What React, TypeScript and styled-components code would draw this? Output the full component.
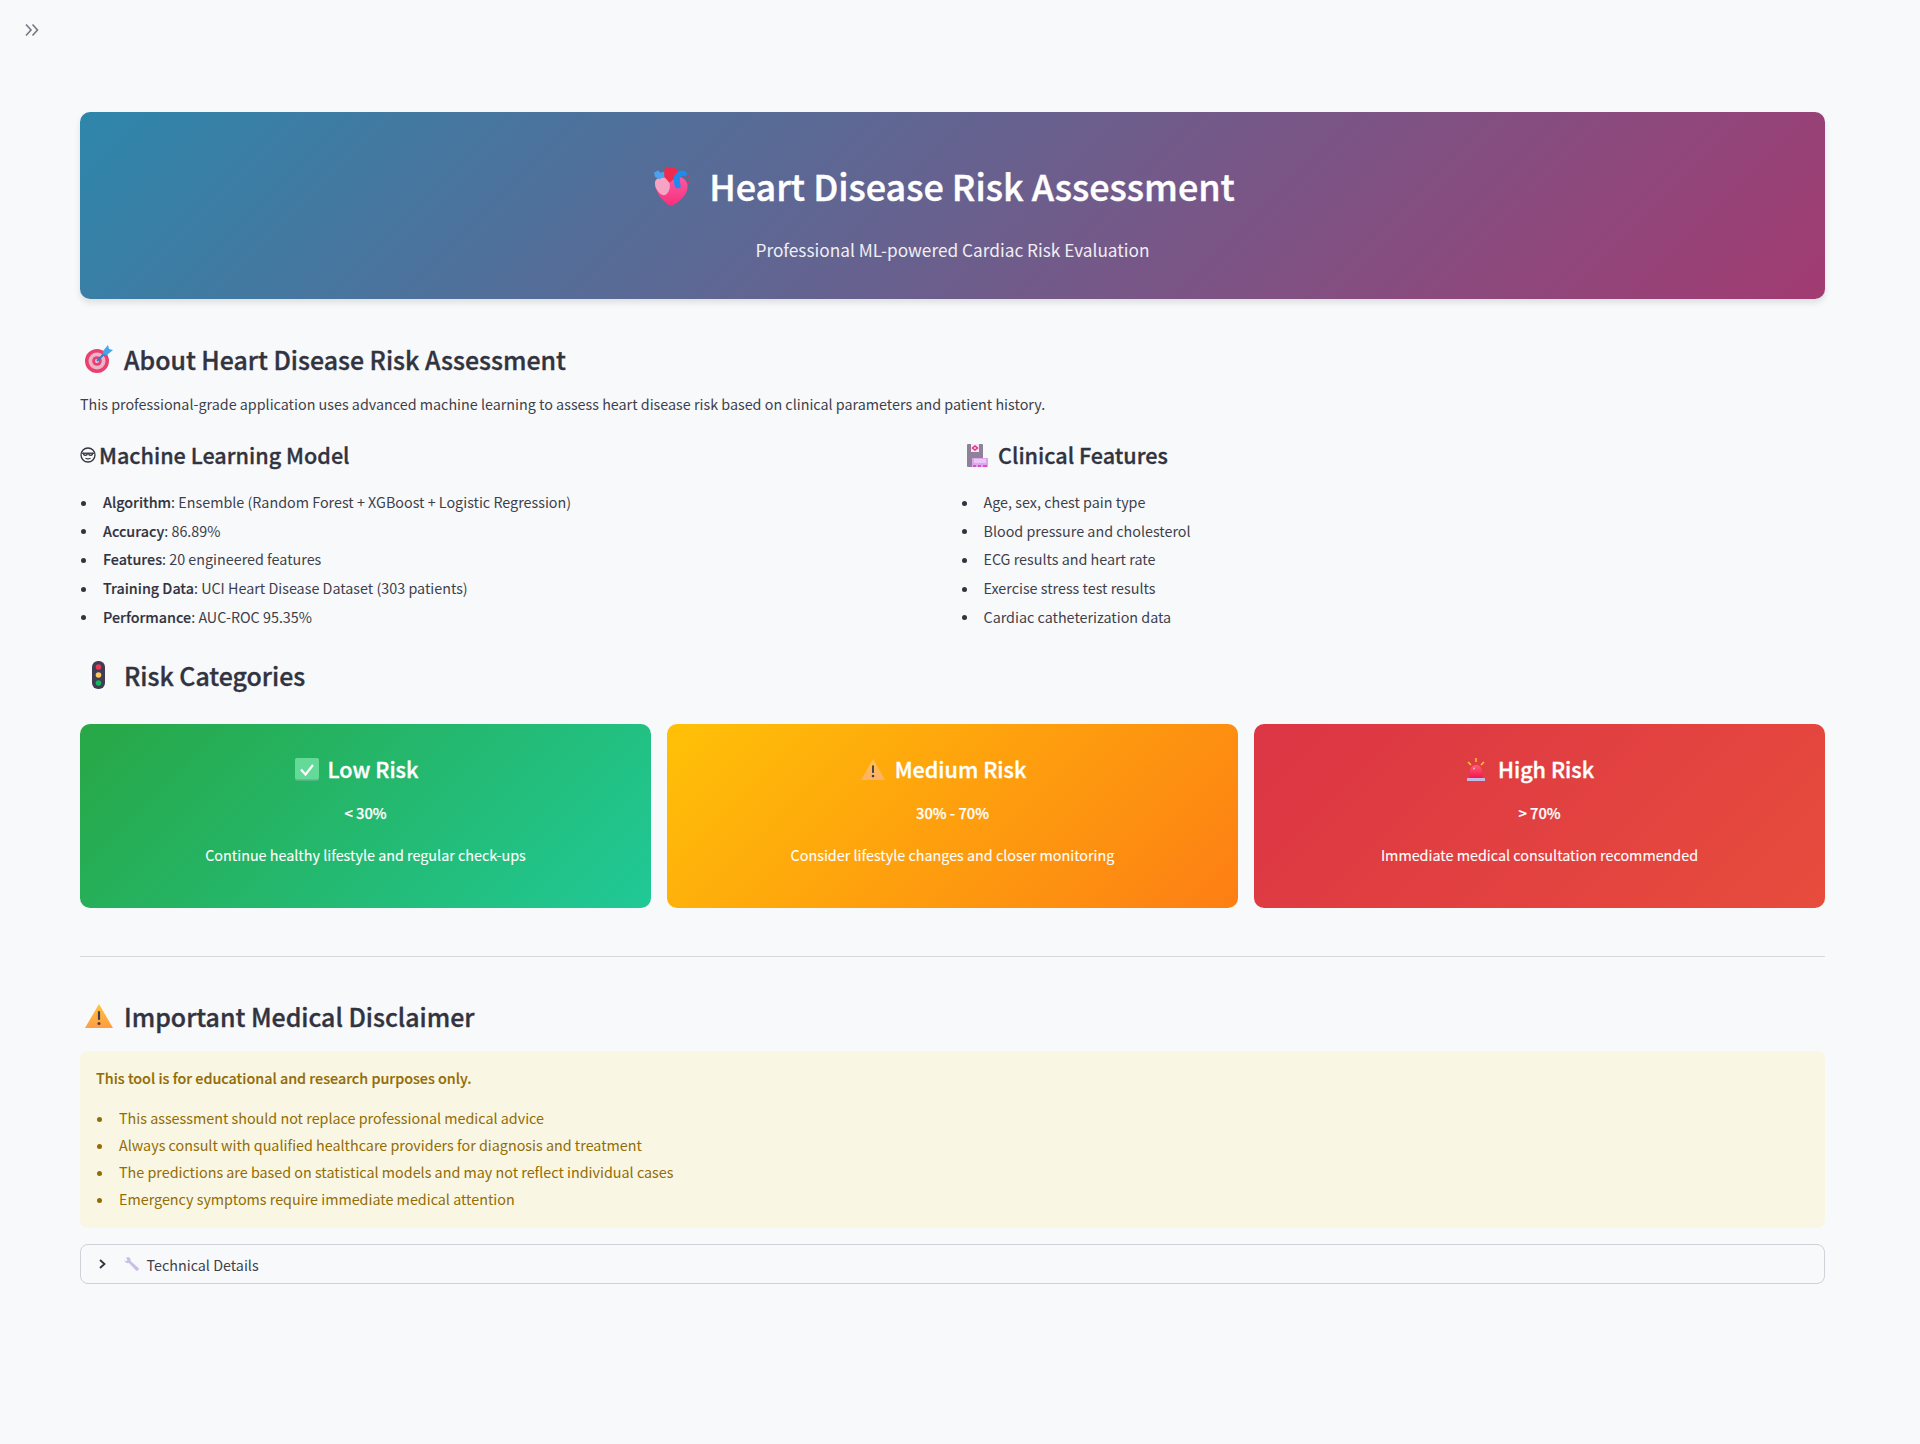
import React from "react";
import styled, { createGlobalStyle } from "styled-components";

const Global = createGlobalStyle`
  html, body { margin: 0; padding: 0; background: #f8f9fb; }
  body { font-family: "Noto Sans CJK SC", "Noto Sans", sans-serif; color: #31333f; font-size: 14.33px; }
  * { box-sizing: border-box; }
`;

const Page = styled.div`
  min-height: 1444px;
  background: #f8f9fb;
  position: relative;
  padding: 112px 95px 0 80px;
`;
const Toggle = styled.div`
  position: absolute; left: 24px; top: 22px; width: 16px; height: 16px; color: #737683;
  svg { display: block; }
`;
const Hero = styled.header`
  height: 187px;
  border-radius: 10px;
  background: linear-gradient(135deg, #2e86ab 0%, #a23b72 100%);
  box-shadow: 0 4px 6px rgba(0,0,0,0.1);
  color: #fff;
  text-align: center;
  padding-top: 47px;
`;
const HeroTitle = styled.h1`
  margin: 0; height: 52px; padding-right: 17px; font-size: 35.9px; line-height: 52px; font-weight: 500; -webkit-text-stroke: 0.45px currentColor;
  display: flex; justify-content: center; align-items: center; gap: 20px;
  svg { margin-top: 2px; }
`;
const HeroSub = styled.p`
  margin: 25.5px 0 0; font-size: 17.25px; line-height: 26px; opacity: .9;
`;
const H2 = styled.h2`
  margin: ${p => p.$mt}px 0 0; font-size: 24.9px; line-height: 36px; font-weight: 500; -webkit-text-stroke: 0.35px currentColor;
  display: flex; align-items: center; gap: ${p => p.$gap}px; color: #31333f;
  svg { margin-left: ${p => p.$inset}px; }
`;
const Para = styled.p`
  margin: 16px 0 0; line-height: 22px; color: #3d3f4b;
`;
const Columns = styled.div`
  display: grid; grid-template-columns: 1fr 1fr; column-gap: 16px; margin-top: 23.4px;
`;
const H3 = styled.h3`
  margin: 0; font-size: 21.6px; line-height: 34px; font-weight: 500; -webkit-text-stroke: 0.3px currentColor;
  display: flex; align-items: center; gap: ${p => p.$gap}px;
  svg { margin-left: ${p => p.$inset}px; }
`;
const List = styled.ul`
  margin: 18.5px 0 0; padding: 0 0 0 23px; line-height: 22px; list-style: none; color: #3d3f4b;
  li { margin-bottom: 6.7px; }
  li::before { content: ""; display: inline-block; width: 5px; height: 5px; border-radius: 50%; background: #31333f; margin: 0 17px 2px -22px; vertical-align: middle; }
  b { font-weight: 500; color: #31333f; -webkit-text-stroke: 0.15px currentColor; }
`;
const Cards = styled.div`
  display: grid; grid-template-columns: repeat(3, 1fr); gap: 16px; margin-top: 31px;
`;
const Card = styled.div`
  height: 184px; border-radius: 10px; color: #fff; text-align: center; padding-top: 29px;
  background: ${p => p.$bg};
`;
const CardTitle = styled.h3`
  margin: 0; padding-right: 18px; font-size: 21.6px; line-height: 32px; font-weight: 500; -webkit-text-stroke: 0.35px currentColor;
  display: flex; justify-content: center; align-items: center; gap: ${p => p.$gap}px;
`;
const CardRange = styled.div`
  margin-top: 17px; font-size: 14.7px; line-height: 22px; font-weight: 500; -webkit-text-stroke: 0.25px currentColor;
`;
const CardText = styled.div`
  margin-top: 20px; font-size: 14.35px; line-height: 22px; -webkit-text-stroke: 0.1px currentColor;
`;
const Rule = styled.hr`
  margin: 48px 0 0; border: 0; border-top: 1px solid #d6d8dd;
`;
const Notice = styled.div`
  margin-top: 17.5px; background: #f9f6e3; border-radius: 8px; color: #926c05; padding: 16px;
  height: 177px;
`;
const NoticeLead = styled.p`
  margin: 0; line-height: 22px; font-weight: 500; -webkit-text-stroke: 0.15px currentColor;
`;
const NoticeList = styled.ul`
  margin: 18px 0 0; padding-left: 23px; line-height: 22px; list-style: none;
  li { margin-bottom: 5px; }
  li::before { content: ""; display: inline-block; width: 5px; height: 5px; border-radius: 50%; background: currentColor; margin: 0 17px 2px -22px; vertical-align: middle; }
`;
const Expander = styled.div`
  margin-top: 16px; height: 40px; border: 1px solid #d0d2d9; border-radius: 8px; display: flex; align-items: center; padding-left: 16px; gap: 15px; color: #3d3f4b;
`;
const ExpanderLabel = styled.span`
  display: flex; align-items: center; gap: 7.5px;
`;

const Heart = () => (
  <svg width="36" height="40" viewBox="0 0 35 48" preserveAspectRatio="none">
    <defs>
      <linearGradient id="hb" x1="0" y1="0" x2="0" y2="1">
        <stop offset="0" stopColor="#fb5aa5" />
        <stop offset="1" stopColor="#f8307a" />
      </linearGradient>
    </defs>
    <path d="M2 22C1 14 9 11 15 14c5-4 15-2 18 6 3 10-5 22-14 27-2 1-4 0-5-1C8 40 3 32 2 22z" fill="url(#hb)" />
    <path d="M2 22C1 15 8 12 13 15c5 4 4 15 0 19-2 2-5 1-7-2-3-4-4-7-4-10z" fill="#f6a3c4" />
    <path d="M1 8l4-3 2 3 4-1 1 6-6 3-4-3z" fill="#4ba3ef" />
    <path d="M11 4l3-4 2 3 4-2 4 4-2 9-6 6-5-7z" fill="#f0294e" />
    <path d="M20 15c1-7 6-10 10-9 3 1 4 4 2 6-4-1-6 1-6 5l1 8c-2 3-5 2-6-1z" fill="#1f8bed" />
    <path d="M32 14l3-1M33 19l2 1" stroke="#f0294e" strokeWidth="1.200" />
  </svg>
);
const Dart = () => (
  <svg width="28" height="28" viewBox="0 0 28 28">
    <circle cx="12" cy="16" r="12" fill="#e9406f" />
    <circle cx="12" cy="16" r="8.500" fill="#edb3c7" />
    <circle cx="12" cy="16" r="4.800" fill="#e9406f" />
    <circle cx="12" cy="16" r="2" fill="#f3c6d4" />
    <path d="M12 16l10-10" stroke="#2b7fd0" strokeWidth="2" />
    <path d="M18 6l5-6 1 4 4 1-6 5-4-1z" fill="#3fa7ee" />
  </svg>
);
const Face = () => (
  <svg width="16" height="16" viewBox="0 0 16 16" fill="none" stroke="#31333f" strokeWidth="1.300">
    <circle cx="8" cy="8" r="7" />
    <path d="M2 6.200h12" />
    <path d="M3.500 6.200c0 2.800 3.500 2.800 4 .3M12.500 6.200c0 2.800-3.500 2.800-4 .3M5.500 11.300c1.700.9 3.300.9 5 0" />
  </svg>
);
const Clipboard = () => (
  <svg width="21" height="23" viewBox="0 0 21 23">
    <rect x="0" y="0" width="16" height="23" rx="1" fill="#8f8199" />
    <rect x="4" y="0" width="8" height="8" fill="#f6e8f2" />
    <path d="M5.500 4l2.500-2 2.500 2L8 6z" fill="none" stroke="#ee2f84" strokeWidth="1.500" />
    <rect x="5" y="14" width="16" height="9" fill="#dca6ee" />
    <path d="M7 16h12M7 18h12" stroke="#fbe8fb" strokeWidth="1" />
    <path d="M6 22h3M11 22h3M16 22h4" stroke="#e52fb5" strokeWidth="1.500" />
  </svg>
);
const Traffic = () => (
  <svg width="13" height="28" viewBox="0 0 13 28">
    <rect x="0" y="0" width="13" height="28" rx="6" fill="#413c53" />
    <circle cx="6.500" cy="6" r="2.800" fill="#e83a58" />
    <circle cx="6.500" cy="14" r="2.800" fill="#fcc860" />
    <circle cx="6.500" cy="22" r="2.800" fill="#14b85a" />
  </svg>
);
const Check = () => (
  <svg width="24" height="23" viewBox="0 0 24 23">
    <rect x="0" y="0" width="24" height="23" rx="2" fill="#4fb583" />
    <rect x="0" y="0" width="24" height="21.500" rx="2" fill="#64da98" />
    <path d="M6 11.500l4.500 5L18 7" fill="none" stroke="#fff" strokeWidth="2.200" />
  </svg>
);
const Warn = ({ w, h, id, top, bottom }: { w: number; h: number; id: string; top: string; bottom: string }) => (
  <svg width={w} height={h} viewBox="0 0 28 24" preserveAspectRatio="none">
    <defs>
      <linearGradient id={id} x1="0" y1="0" x2="0" y2="1">
        <stop offset="0" stopColor={top} />
        <stop offset="1" stopColor={bottom} />
      </linearGradient>
    </defs>
    <path d="M14 0L28 24H0z" fill={`url(#${id})`} />
    <rect x="12.900" y="7" width="2.200" height="9" rx="1" fill="#413c53" />
    <circle cx="14" cy="19.500" r="1.500" fill="#413c53" />
  </svg>
);
const Siren = () => (
  <svg width="18" height="23" viewBox="0 0 18 23">
    <defs>
      <linearGradient id="sr" x1="0" y1="0" x2="0" y2="1">
        <stop offset="0" stopColor="#ff5f78" />
        <stop offset="1" stopColor="#f5154c" />
      </linearGradient>
    </defs>
    <path d="M2.500 20c0-8 1-13 6.500-13s6.500 5 6.500 13z" fill="url(#sr)" />
    <circle cx="7" cy="10.500" r="1" fill="#ffb3c0" />
    <rect x="0" y="20" width="18" height="3" fill="#c5b8e8" />
    <path d="M9 0v4M1 4l3 3M17 4l-3 3" stroke="#fcc43f" strokeWidth="1.500" />
  </svg>
);
const Wrench = () => (
  <svg width="15" height="14" viewBox="0 0 15 14">
    <path d="M0 3l2 1.500L3.500 3 2 1 4 0c2 .5 3 2 2.500 4l8 7c1 1.500-.5 3.500-2.500 2.500L5 6C3 6.500 .5 5.500 0 3z" fill="#c9bfe2" />
  </svg>
);

export default function App() {
  return (
    <Page>
      <Global />
      <Toggle>
        <svg width="16" height="16" viewBox="0 0 16 16" fill="none" stroke="currentColor" strokeWidth="1.600">
          <path d="M2 2.500L7 8l-5 5.500M8.500 2.500L13.500 8l-5 5.500" />
        </svg>
      </Toggle>
      <Hero>
        <HeroTitle><Heart />Heart Disease Risk Assessment</HeroTitle>
        <HeroSub>Professional ML-powered Cardiac Risk Evaluation</HeroSub>
      </Hero>
      <H2 $mt={42} $gap={11} $inset={5}><Dart />About Heart Disease Risk Assessment</H2>
      <Para>This professional-grade application uses advanced machine learning to assess heart disease risk based on clinical parameters and patient history.</Para>
      <Columns>
        <div>
          <H3 $gap={3} $inset={0}><Face />Machine Learning Model</H3>
          <List>
            <li><b>Algorithm</b>: Ensemble (Random Forest + XGBoost + Logistic Regression)</li>
            <li><b>Accuracy</b>: 86.89%</li>
            <li><b>Features</b>: 20 engineered features</li>
            <li><b>Training Data</b>: UCI Heart Disease Dataset (303 patients)</li>
            <li><b>Performance</b>: AUC-ROC 95.35%</li>
          </List>
        </div>
        <div>
          <H3 $gap={10} $inset={6.500}><Clipboard />Clinical Features</H3>
          <List>
            <li>Age, sex, chest pain type</li>
            <li>Blood pressure and cholesterol</li>
            <li>ECG results and heart rate</li>
            <li>Exercise stress test results</li>
            <li>Cardiac catheterization data</li>
          </List>
        </div>
      </Columns>
      <H2 $mt={23} $gap={19} $inset={12}><Traffic />Risk Categories</H2>
      <Cards>
        <Card $bg="linear-gradient(135deg, #28a745, #20c997)">
          <CardTitle $gap={9}><Check />Low Risk</CardTitle>
          <CardRange>&lt; 30%</CardRange>
          <CardText>Continue healthy lifestyle and regular check-ups</CardText>
        </Card>
        <Card $bg="linear-gradient(135deg, #ffc107, #fd7e14)">
          <CardTitle $gap={10}><Warn w={24} h={21} id="wm" top="#ffc247" bottom="#ffb168" />Medium Risk</CardTitle>
          <CardRange>30% - 70%</CardRange>
          <CardText>Consider lifestyle changes and closer monitoring</CardText>
        </Card>
        <Card $bg="linear-gradient(135deg, #dc3545, #e74c3c)">
          <CardTitle $gap={13}><Siren />High Risk</CardTitle>
          <CardRange>&gt; 70%</CardRange>
          <CardText>Immediate medical consultation recommended</CardText>
        </Card>
      </Cards>
      <Rule />
      <H2 $mt={40.5} $gap={11} $inset={5}><Warn w={28} h={24} id="wb" top="#ffc43d" bottom="#ff9d42" />Important Medical Disclaimer</H2>
      <Notice>
        <NoticeLead>This tool is for educational and research purposes only.</NoticeLead>
        <NoticeList>
          <li>This assessment should not replace professional medical advice</li>
          <li>Always consult with qualified healthcare providers for diagnosis and treatment</li>
          <li>The predictions are based on statistical models and may not reflect individual cases</li>
          <li>Emergency symptoms require immediate medical attention</li>
        </NoticeList>
      </Notice>
      <Expander>
        <svg width="12" height="16" viewBox="0 0 12 16" fill="none" stroke="#31333f" strokeWidth="1.800"><path d="M3 4l4.500 4L3 12" /></svg>
        <ExpanderLabel><Wrench />Technical Details</ExpanderLabel>
      </Expander>
    </Page>
  );
}
